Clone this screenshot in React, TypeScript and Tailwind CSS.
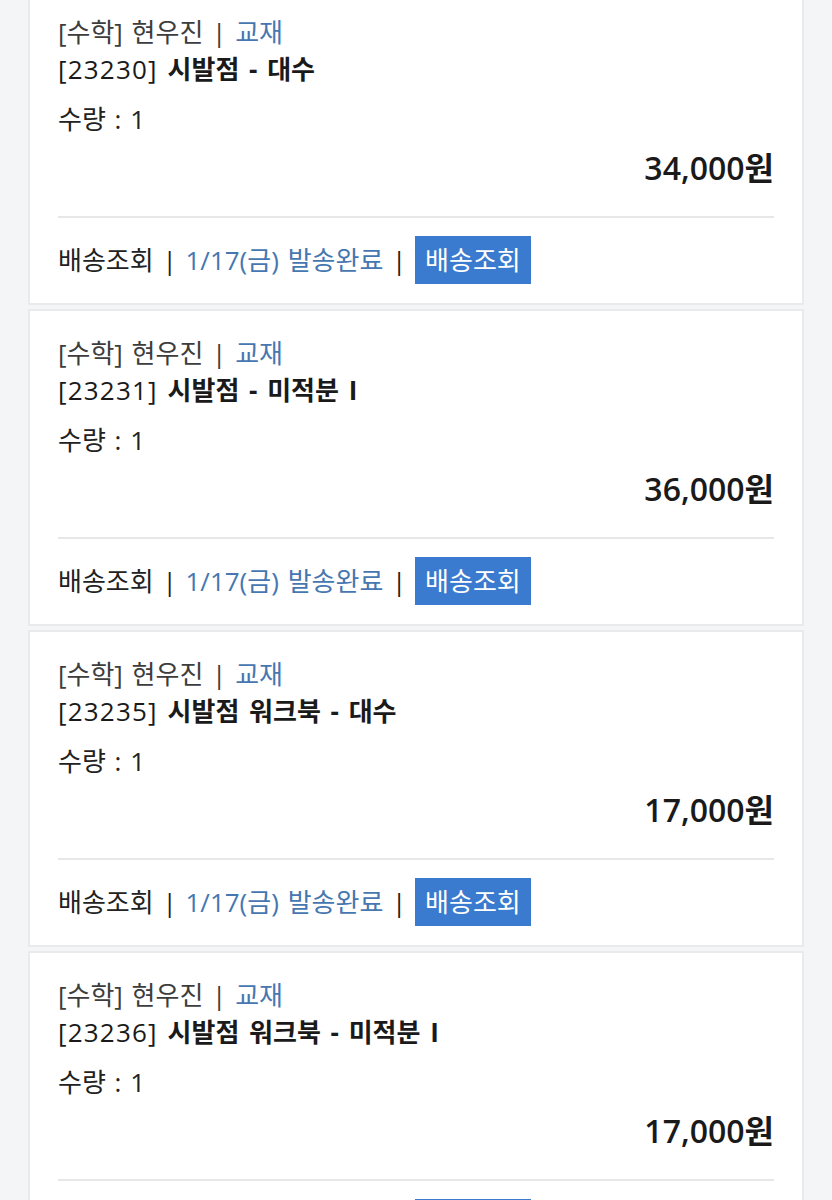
import React from 'react';

type Order = {
  code: string;
  title: string;
  qty: number;
  price: string;
};

const orders: Order[] = [
  { code: '23230', title: '시발점 - 대수', qty: 1, price: '34,000' },
  { code: '23231', title: '시발점 - 미적분 I', qty: 1, price: '36,000' },
  { code: '23235', title: '시발점 워크북 - 대수', qty: 1, price: '17,000' },
  { code: '23236', title: '시발점 워크북 - 미적분 I', qty: 1, price: '17,000' },
];

const OrderCard: React.FC<{ order: Order }> = ({ order }) => (
  <div className="bg-white border-2 border-[#e9eaec] px-[28px] pt-[24px] pb-[19px] [word-spacing:2px]">
    {/* Product info */}
    <div className="text-[26px] leading-[37px] text-[#3d3d3d]">
      [수학] 현우진 | <span className="text-[#4677b0]">교재</span>
    </div>
    <div className="text-[26px] leading-[37px] text-[#1a1a1a] [word-spacing:3px]">
      <span className="tracking-[1.2px]">[{order.code}]</span>{' '}
      <span className="font-bold">{order.title}</span>
    </div>
    <div className="mt-[13px] text-[26px] leading-[37px] text-[#222]">수량 : {order.qty}</div>
    <div className="mt-[10px] text-right text-[32px] leading-[40px] font-semibold text-[#1a1a1a] [word-spacing:0px]">
      {order.price}원
    </div>

    <div className="mt-[28px] h-[2px] bg-[#e6e7e9]" />

    {/* Delivery */}
    <div className="mt-[18px] flex items-center text-[26px] text-[#222]">
      <span>배송조회 |&nbsp;</span>
      <span className="text-[#4677b0]">1/17(금) 발송완료</span>
      <span>&nbsp;|&nbsp;</span>
      <span className="h-[48px] px-[10px] flex items-center bg-[#3a7bd0] text-white">배송조회</span>
    </div>
  </div>
);

const App: React.FC = () => {
  return (
    <div
      className="h-[1200px] bg-[#f4f5f7] overflow-hidden"
      style={{ fontFamily: '"Open Sans", "Noto Sans CJK KR", sans-serif' }}
    >
      <div className="-mt-[12px] ml-[28px] w-[776px] flex flex-col gap-[4px]">
        {orders.map((o) => (
          <OrderCard key={o.code} order={o} />
        ))}
      </div>
    </div>
  );
};

export default App;
